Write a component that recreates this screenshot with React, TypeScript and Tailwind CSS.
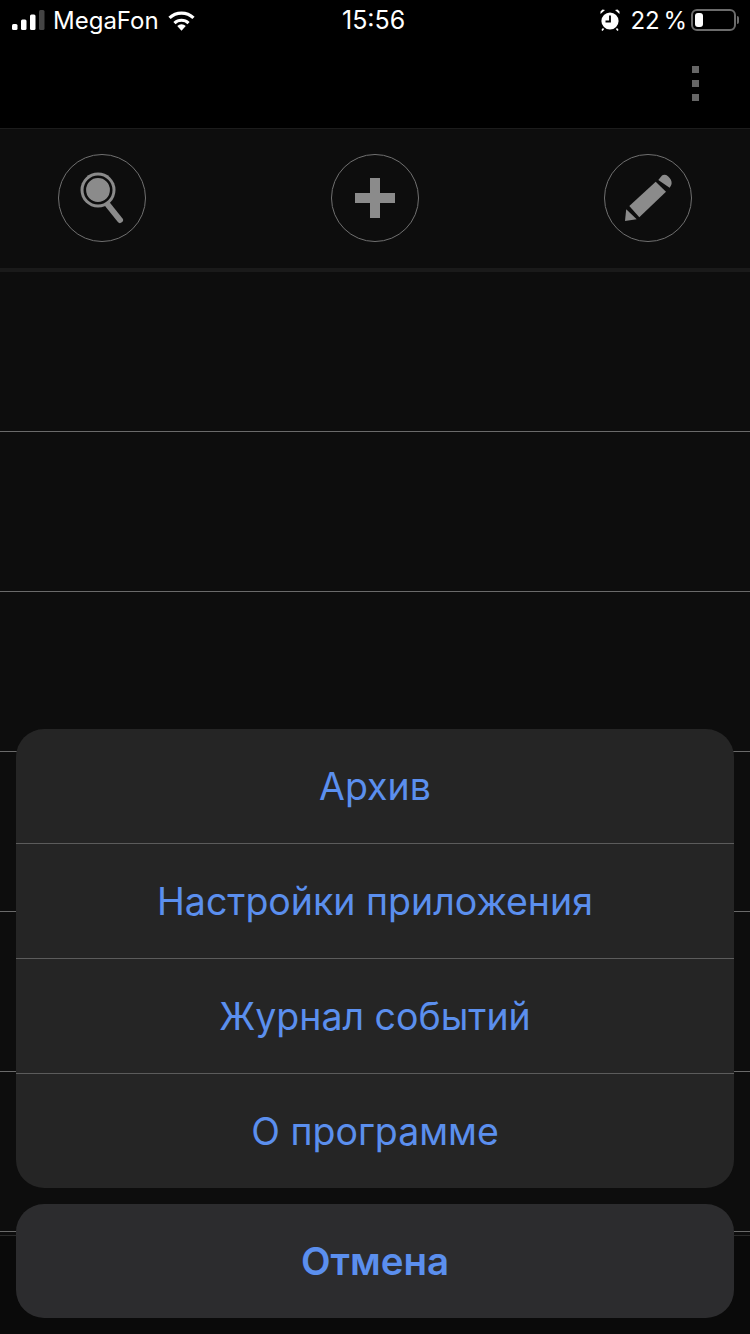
const font = { fontFamily: 'Inter, "Noto Sans", sans-serif' }

function Signal() {
  return (
    <svg width="33" height="20" viewBox="0 0 33 20" className="block">
      <rect x="0" y="14" width="5.5" height="6" rx="1.5" fill="#fff" />
      <rect x="9" y="9.5" width="5.5" height="10.5" rx="1.5" fill="#fff" />
      <rect x="18" y="4.5" width="5.5" height="15.5" rx="1.5" fill="#fff" />
      <rect x="27" y="0" width="5.5" height="20" rx="1.5" fill="#444" />
    </svg>
  )
}

function Wifi() {
  return (
    <svg width="29" height="22" viewBox="0 0 30 22" className="block">
      <path d="M15 22 10.6 17.2a6.4 6.4 0 0 1 8.8 0Z" fill="#fff" />
      <path d="M7.7 14.2a10.6 10.6 0 0 1 14.6 0" fill="none" stroke="#fff" strokeWidth="3.2" />
      <path d="M2.6 8.8a18 18 0 0 1 24.8 0" fill="none" stroke="#fff" strokeWidth="3.4" />
    </svg>
  )
}

function Alarm() {
  return (
    <svg width="20" height="22" viewBox="0 0 20 22" className="block">
      <circle cx="10" cy="12" r="8.6" fill="#fff" />
      <path d="M10 6.5V12.5H5.5" fill="none" stroke="#000" strokeWidth="1.8" />
      <path d="M0.5 5 5 1 2.5 0.5 0.5 2.5Z M19.5 5 15 1 17.5 0.5 19.5 2.5Z" fill="#fff" />
      <path d="M3.5 19.5 2 21.5M16.5 19.5 18 21.5" stroke="#fff" strokeWidth="1.6" />
    </svg>
  )
}

function Battery() {
  return (
    <div className="flex items-center gap-[1px] mb-[2px]">
      <div className="w-[45px] h-[22px] rounded-[6px] border-2 border-[#6b6b6b] p-[2px]">
        <div className="w-[8px] h-full rounded-[3px] bg-white" />
      </div>
      <div className="w-[2px] h-[8px] rounded-r-sm bg-[#6b6b6b]" />
    </div>
  )
}

function SearchIcon() {
  return (
    <svg width="44" height="52" viewBox="0 0 44 52" className="block">
      <circle cx="18" cy="18" r="17.5" fill="#8b8b8b" />
      <circle cx="18" cy="18" r="13.2" fill="none" stroke="#0d0d0d" strokeWidth="2.6" />
      <path d="M28 33 40 48" stroke="#8b8b8b" strokeWidth="6" strokeLinecap="round" />
    </svg>
  )
}

function PlusIcon() {
  return (
    <svg width="40" height="40" viewBox="0 0 40 40" className="block">
      <path d="M15 0H25V15H40V25H25V40H15V25H0V15H15Z" fill="#8b8b8b" />
    </svg>
  )
}

function PencilIcon() {
  return (
    <svg width="48" height="48" viewBox="0 0 48 48" className="block">
      <path d="M33.3 6 37 1.6C38.5 .4 41 .5 43 2.2 45.5 4.2 47 7 46.6 9.5 46.4 11 45.5 12.6 44.6 13.8Z" fill="#8b8b8b" />
      <path d="M30.7 7.7 41 17.7 14.3 43.3 4.3 32Z" fill="#8b8b8b" />
      <path d="M1.2 35.3 11.7 45.3 0 47Z" fill="#8b8b8b" />
    </svg>
  )
}

function RoundButton({ children }: { children: React.ReactNode }) {
  return (
    <div className="w-[88px] h-[88px] rounded-full border border-[#707070] flex items-center justify-center">
      {children}
    </div>
  )
}

function ListRow() {
  return <div className="h-[160px] border-b border-[#6a6a6a]" />
}

const menuItems = ['Архив', 'Настройки приложения', 'Журнал событий', 'О программе']

export default function App() {
  return (
    <div className="relative w-[750px] h-[1334px] overflow-hidden bg-[#0a0a0a]" style={font}>
      <div className="h-[129px] bg-black border-b border-[#1c1c1c]">
        <div className="h-[40px] relative flex items-center justify-between pl-[12px] pr-[11px] pt-[2px] text-white text-[24px]">
          <div className="flex items-center">
            <span className="mb-[3px]"><Signal /></span>
            <span className="ml-[8px]">MegaFon</span>
            <span className="ml-[8px] mb-[3px]"><Wifi /></span>
          </div>
          <span className="absolute left-[342px] text-[25px]">15:56</span>
          <div className="flex items-center">
            <span className="mb-[2px]"><Alarm /></span>
            <span className="ml-[10px] mr-[4px] [word-spacing:-3px]">22 %</span>
            <Battery />
          </div>
        </div>
        <div className="flex flex-col items-end gap-[7px] pr-[51px] pt-[26px]">
          <div className="w-[7px] h-[7px] bg-[#666]" />
          <div className="w-[7px] h-[7px] bg-[#666]" />
          <div className="w-[7px] h-[7px] bg-[#666]" />
        </div>
      </div>

      <div className="bg-[#0d0d0d]">
        <div className="h-[139px] flex items-center justify-between pl-[58px] pr-[58px] pb-[2px]">
          <RoundButton><SearchIcon /></RoundButton>
          <RoundButton><PlusIcon /></RoundButton>
          <RoundButton><span className="ml-[2px]"><PencilIcon /></span></RoundButton>
        </div>
        <div className="h-[4px] bg-[#1a1a1a]" />

        <ListRow />
        <ListRow />
        <ListRow />
        <ListRow />
        <ListRow />
        <ListRow />
        <div className="h-[4px] border-b border-[#2a2a2a]" />
      </div>

      <div className="absolute left-[16px] right-[16px] bottom-[16px] flex flex-col gap-[16px]">
        <div className="rounded-[28px] bg-[#252525] overflow-hidden">
          {menuItems.map((item, i) => (
            <div
              key={item}
              className={`flex items-center justify-center pt-[2px] text-[37.5px] text-[#5b8fee] ${i > 0 ? 'h-[115px] border-t border-[#5c5c5c]' : 'h-[114px]'}`}
            >
              {item}
            </div>
          ))}
        </div>
        <div className="h-[114px] pt-[2px] rounded-[28px] bg-[#2c2c2e] flex items-center justify-center text-[38.5px] font-semibold text-[#5b8fee]">
          Отмена
        </div>
      </div>
    </div>
  )
}
